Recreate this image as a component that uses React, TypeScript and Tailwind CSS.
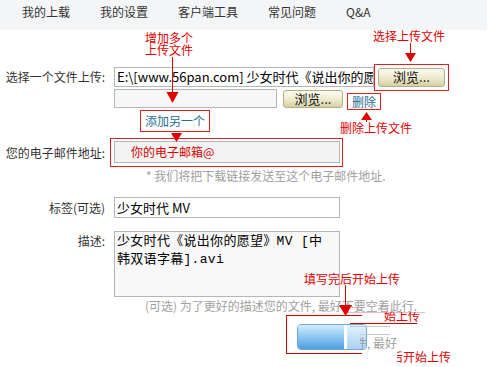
import React from 'react';

const cjk = { fontFamily: '"Noto Sans CJK SC", "Liberation Sans", sans-serif' };

const navItems = ['我的上载', '我的设置', '客户端工具', '常见问题', 'Q&A'];

const BrowseButton = ({ className }: { className: string }) => (
  <div
    className={`flex items-center justify-center rounded-[3px] border border-[#b4ae87] bg-gradient-to-b from-[#fdfcf3] via-[#efebd0] to-[#d6d0a3] text-[13px] text-[#111] ${className}`}
  >
    浏览...
  </div>
);

const App = () => {
  return (
    <div className="relative w-[493px] h-[367px] overflow-hidden bg-white text-[12px] text-[#333]" style={cjk}>
      {/* top menu */}
      <div className="flex h-[30px] w-[487px] gap-[30px] bg-[#f4f5f7] pl-[22px] pt-[4px] leading-[16px]">
        {navItems.map((n) => (
          <span key={n}>{n}</span>
        ))}
      </div>

      {/* file row */}
      <div className="mt-[37px] flex h-[20px] items-center">
        <div className="w-[110px] pr-[5px] text-right">选择一个文件上传:</div>
        <div className="ml-[4px] h-[20px] w-[260px] overflow-hidden whitespace-nowrap border border-[#b3b6ba] bg-white pl-[2px] text-[13px] leading-[18px] text-black">
          E:\[www.56pan.com] 少女时代《说出你的愿望》MV [中韩双语字幕].avi
        </div>
        <div className="border border-[#e0201c] p-[3px]">
          <BrowseButton className="h-[19px] w-[67px]" />
        </div>
      </div>

      <div className="mt-[2px] flex h-[19px] items-center">
        <div className="ml-[114px] h-[19px] w-[163px] border border-[#b3b6ba] bg-[#f7f7f7]" />
        <BrowseButton className="ml-[6px] h-[18px] w-[60px]" />
        <span className="ml-[4px] mt-[5px] h-[17px] border border-[#e0201c] px-[4px] leading-[15px] text-[#1d6f93]">删除</span>
      </div>

      <div className="mt-[2px] flex h-[22px]">
        <span className="ml-[140px] w-[70px] border border-[#e0201c] text-center leading-[20px] text-[#1d6f93]">添加另一个</span>
      </div>

      {/* email */}
      <div className="mt-[6px] flex items-center">
        <div className="w-[110px] pr-[5px] text-right">您的电子邮件地址:</div>
        <div className="border border-[#e0201c] pb-[3px] pl-[3px] pr-[2px] pt-[2px]">
          <div className="h-[22px] w-[226px] border border-[#b3b6ba] bg-[#f4f4f4] pl-[16px] leading-[20px] text-[#d40000]">
            你的电子邮箱@
          </div>
        </div>
      </div>
      <div className="mt-[2px] ml-[146px] leading-[14px] text-[#a0a0a0]">* 我们将把下载链接发送至这个电子邮件地址.</div>

      {/* tag */}
      <div className="mt-[14px] flex items-center">
        <div className="w-[110px] pr-[5px] text-right">标签(可选)</div>
        <div className="ml-[4px] h-[21px] w-[226px] border border-[#b3b6ba] bg-white pl-[2px] text-[13px] leading-[19px] text-black">
          少女时代 MV
        </div>
      </div>

      {/* description */}
      <div className="mt-[13px] flex">
        <div className="w-[110px] pr-[5px] pt-[1px] text-right leading-[18px]">描述:</div>
        <div
          className="ml-[4px] h-[66px] w-[226px] whitespace-pre border border-[#b3b6ba] bg-[#f8f8f8] pl-[2px] pt-[1px] text-[13px] leading-[18px] tracking-[0.3px] text-black"
          style={{ fontFamily: '"Liberation Mono", "Noto Sans CJK SC", monospace' }}
        >
          {'少女时代《说出你的愿望》MV [中\n韩双语字幕].avi'}
        </div>
      </div>
      <div className="mt-[2px] ml-[145px] leading-[14px] text-[#a0a0a0]">(可选) 为了更好的描述您的文件, 最好不要空着此行.</div>

      {/* upload button */}
      <div className="mt-[11px] ml-[297px] flex h-[26px] w-[70px] overflow-hidden rounded-[4px] border border-[#6ea8d8]">
        <div className="h-full w-[46px] bg-gradient-to-b from-[#d2ecfd] via-[#8cc6f1] to-[#4d9ee2]" />
        <div className="h-full w-[3px] bg-white" />
        <div className="h-full flex-1 bg-gradient-to-b from-[#e3f2fd] to-[#a9d3f4]" />
      </div>

      {/* annotations */}
      <div className="absolute left-[145px] top-[32px] leading-[12px] text-[#e00000]">
        增加多个
        <br />
        上传文件
      </div>
      <div className="absolute left-[373px] top-[29px] leading-[13px] text-[#e00000]">选择上传文件</div>
      <div className="absolute left-[340px] top-[121px] leading-[13px] text-[#e00000]">删除上传文件</div>
      <div className="absolute left-[304px] top-[272px] leading-[13px] text-[#e00000]">填写完后开始上传</div>

      {/* upload area red frame and smeared fragments */}
      <div className="absolute left-[286px] top-[315px] h-[39px] w-[76px] border-b border-l border-t border-[#d40000]" />
      <div className="absolute left-[347px] top-[312px] h-[1px] w-[78px] bg-[#f4b8c0]" />
      <div className="absolute left-[384px] top-[312px] h-[11px] overflow-hidden leading-[13px] text-[#e00000]">
        <div className="-mt-[3px]">始上传</div>
      </div>
      <div className="absolute left-[350px] top-[323px] h-[1px] w-[67px] bg-[#d40000]" />
      <div className="absolute left-[350px] top-[326px] h-[1px] w-[40px] bg-[#c8c8c8]" />
      <div className="absolute left-[360px] top-[334px] h-[1px] w-[30px] bg-[#c8c8c8]" />
      <div className="absolute left-[360px] top-[336px] w-[40px] overflow-hidden whitespace-nowrap leading-[14px] text-[#a0a0a0]">
        <span className="-ml-[5px]">件, 最好</span>
      </div>
      <div className="absolute left-[397px] top-[350px] w-[60px] overflow-hidden whitespace-nowrap leading-[13px] text-[#e00000]">
        <span className="-ml-[6px]">后开始上传</span>
      </div>

      <svg className="pointer-events-none absolute left-0 top-0" width="493" height="367" viewBox="0 0 493 367">
        <g fill="#e00000" stroke="none">
          <rect x="172" y="57" width="1" height="37" />
          <polygon points="166.5,92 178.5,92 172.5,103" />
          <rect x="410" y="43" width="1" height="11" />
          <polygon points="405,53 416,53 410.5,62" />
          <polygon points="361,120 372,120 366.5,112" />
          <rect x="366" y="119" width="1" height="3" />
          <polygon points="171,133 182,133 176.5,142" />
          <rect x="345" y="285" width="1" height="21" />
          <polygon points="339,305 352,305 345.5,316" />
        </g>
      </svg>
    </div>
  );
};

export default App;
